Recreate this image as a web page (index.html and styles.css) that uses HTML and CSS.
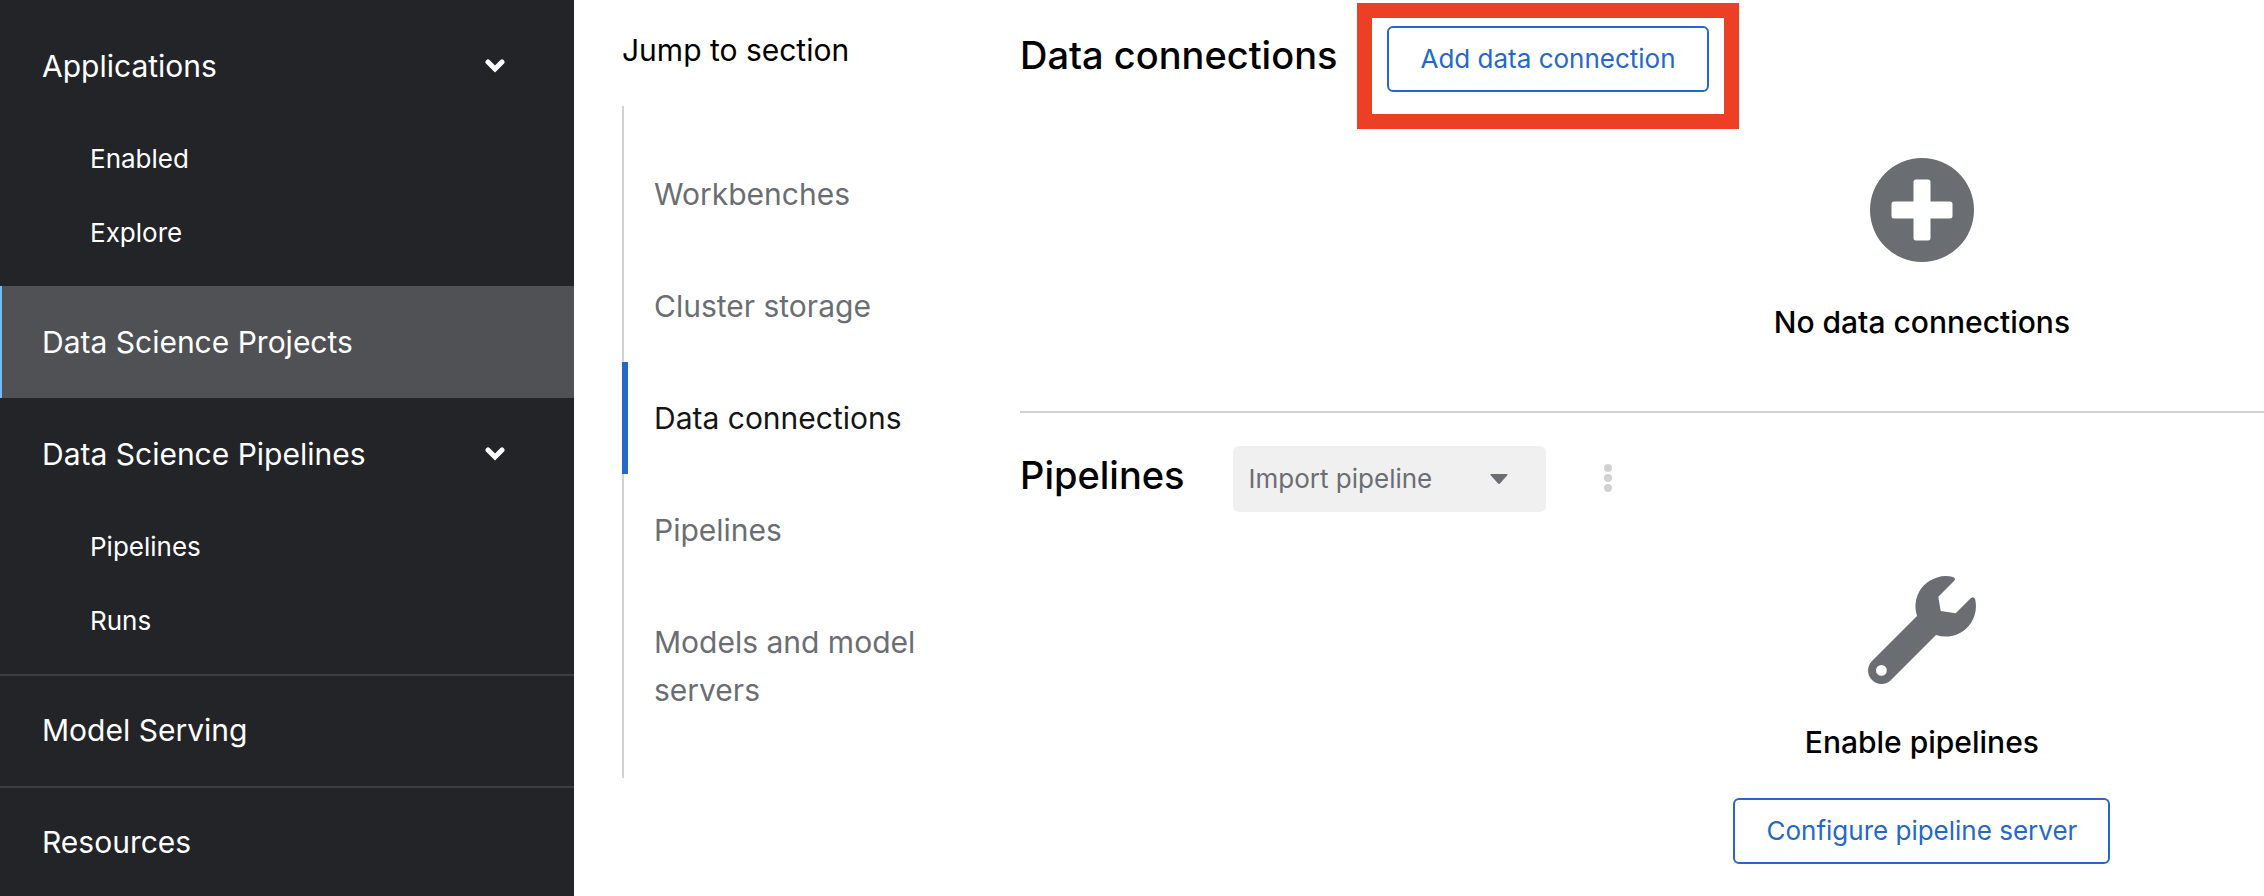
FILE: index.html
```
<!DOCTYPE html>
<html lang="en">
<head>
<meta charset="utf-8">
<title>Data Science Projects</title>
<link rel="stylesheet" href="styles.css">
</head>
<body>
<div class="page">
  <nav class="sidebar" aria-label="Global">
    <ul class="nav-list">
      <li>
        <button class="nav-link" type="button" aria-expanded="true">Applications
          <svg class="nav-toggle" viewBox="0 0 22 14" aria-hidden="true"><path d="M4 3l7 7 7-7"/></svg>
        </button>
        <ul class="subnav">
          <li><a class="subnav-link" href="#enabled">Enabled</a></li>
          <li><a class="subnav-link" href="#explore">Explore</a></li>
        </ul>
      </li>
      <li><a class="nav-link nav-link-current" href="#projects" aria-current="page">Data Science Projects</a></li>
      <li>
        <button class="nav-link" type="button" aria-expanded="true">Data Science Pipelines
          <svg class="nav-toggle" viewBox="0 0 22 14" aria-hidden="true"><path d="M4 3l7 7 7-7"/></svg>
        </button>
        <ul class="subnav">
          <li><a class="subnav-link" href="#nav-pipelines">Pipelines</a></li>
          <li><a class="subnav-link" href="#runs">Runs</a></li>
        </ul>
      </li>
      <li><a class="nav-link nav-link-divided" href="#serving">Model Serving</a></li>
      <li><a class="nav-link nav-link-divided" href="#resources">Resources</a></li>
    </ul>
  </nav>

  <aside class="jump">
    <h2 class="jump-title" id="jump-title">Jump to section</h2>
    <ul class="jump-list" aria-labelledby="jump-title">
      <li><a class="jump-link" href="#workbenches">Workbenches</a></li>
      <li><a class="jump-link" href="#storage">Cluster storage</a></li>
      <li><a class="jump-link jump-link-current" href="#connections">Data connections</a></li>
      <li><a class="jump-link" href="#pipelines">Pipelines</a></li>
      <li><a class="jump-link" href="#models">Models and model servers</a></li>
    </ul>
  </aside>

  <main class="content">
    <section class="section section-connections" id="connections">
      <header class="section-header">
        <h2 class="section-title">Data connections</h2>
        <div class="highlight"><button class="button" type="button">Add data connection</button></div>
      </header>
      <div class="empty">
        <svg class="empty-icon" viewBox="0 0 108 108" aria-hidden="true"><path fill-rule="evenodd" d="M54 2a52 52 0 1 1 0 104a52 52 0 1 1 0-104zM48 23.500q-2.500 0-2.500 2.500v19.500H26q-2.500 0-2.500 2.500v12q0 2.500 2.500 2.500h19.500V82q0 2.500 2.500 2.500h12q2.500 0 2.500-2.500V62.500H82q2.500 0 2.500-2.500V48q0-2.500-2.500-2.500H62.500V26q0-2.500-2.500-2.500z"/></svg>
        <h3 class="empty-title">No data connections</h3>
      </div>
    </section>
    <section class="section section-pipelines" id="pipelines">
      <header class="section-header">
        <h2 class="section-title">Pipelines</h2>
        <button class="dropdown" type="button" disabled>Import pipeline
          <svg class="caret" viewBox="0 0 18 10" aria-hidden="true"><path d="M1 0h16q1 0 .5 1L10 9.500q-1 .8-2 0L.5 1Q0 0 1 0z"/></svg>
        </button>
        <button class="kebab" type="button" disabled aria-label="Pipeline actions">
          <svg class="kebab-icon" viewBox="0 0 8 28" aria-hidden="true"><circle cx="4" cy="4" r="4"/><circle cx="4" cy="14" r="4"/><circle cx="4" cy="24" r="4"/></svg>
        </button>
      </header>
      <div class="empty">
        <svg class="empty-icon" viewBox="0 0 108 108" aria-hidden="true"><path fill-rule="evenodd" d="M85 1Q88.500 2.500 86 5L70.300 20.700L72.700 35L87.700 37.300L103 22Q106.500 20 107.300 24A30.300 30.300 0 0 1 68 59L23 104A13.400 13.400 0 0 1 4 85L49 40A30.300 30.300 0 0 1 85 1zM13.400 89a5.400 5.400 0 1 0 0 10.800a5.400 5.400 0 1 0 0-10.800z"/></svg>
        <h3 class="empty-title">Enable pipelines</h3>
        <button class="button" type="button">Configure pipeline server</button>
      </div>
    </section>
  </main>
</div>
</body>
</html>
```
FILE: styles.css
```
* {
  box-sizing: border-box;
}

body,
h2,
h3,
ul {
  margin: 0;
  padding: 0;
}

body,
button {
  font-family: Inter, "Liberation Sans", sans-serif;
  font-size: 30px;
  line-height: 48px;
}

ul {
  list-style: none;
}

a {
  text-decoration: none;
}

.page {
  display: grid;
  grid-template-columns: 574px 446px 1fr;
  height: 100vh;
  overflow: hidden;
  background: #fff;
  color: #000;
}

.sidebar {
  padding-top: 10px;
  background: #232428;
}

.nav-link {
  display: flex;
  align-items: center;
  justify-content: space-between;
  width: 100%;
  padding: 32px 68px 32px 42px;
  border: 0;
  background: none;
  color: #fff;
  text-align: left;
}

.nav-link-current {
  background: #505155;
  box-shadow: inset 2px 0 #73bcf7;
}

.nav-link-divided {
  box-shadow: inset 0 2px #3c3f42;
}

.nav-toggle {
  width: 22px;
  fill: none;
  stroke: #fff;
  stroke-width: 5;
  stroke-linecap: round;
}

.subnav {
  padding-bottom: 16px;
}

.subnav-link {
  display: block;
  padding: 16px 32px 16px 90px;
  color: #fff;
  font-size: 26px;
  line-height: 42px;
}

.jump {
  padding: 26px 48px;
}

.jump-title {
  margin-bottom: 32px;
  font-size: 30px;
  font-weight: 400;
}

.jump-list {
  padding: 32px 0;
  box-shadow: inset 2px 0 #d2d2d2;
}

.jump-link {
  display: block;
  padding: 32px;
  color: #6a6e73;
}

.jump-link-current {
  box-shadow: inset 6px 0 #2468c8;
  color: #151515;
}

.section-header {
  display: flex;
  align-items: flex-start;
}

.section-title {
  font-size: 38px;
  font-weight: 500;
  line-height: 52px;
}

.section-connections {
  padding-top: 3px;
  border-bottom: 2px solid #d2d2d2;
}

.section-connections .section-title {
  padding-top: 26px;
}

.highlight {
  margin-left: 20px;
  padding: 8px 15px 22px;
  border: 15px solid #ec3f26;
}

.button {
  padding: 10px 31px;
  border: 2px solid #2468c8;
  border-radius: 6px;
  background: #fff;
  color: #2468c8;
  font-size: 26px;
  line-height: 42px;
}

.empty {
  display: flex;
  flex-direction: column;
  align-items: center;
  padding-left: 45%;
}

.empty-icon {
  width: 108px;
  height: 108px;
  fill: #6a6e73;
}

.section-connections .empty {
  padding-top: 27px;
  padding-bottom: 65px;
}

.empty-title {
  margin-top: 34px;
  font-size: 30px;
  font-weight: 500;
}

.section-pipelines {
  padding-top: 33px;
}

.section-pipelines .section-title {
  padding-top: 3px;
}

.section-pipelines .empty {
  padding-top: 64px;
}

.section-pipelines .button {
  margin-top: 32px;
}

.dropdown {
  display: flex;
  align-items: center;
  gap: 58px;
  margin-left: 48px;
  padding: 12px 38px 12px 16px;
  border: 0;
  border-radius: 6px;
  background: #f0f0f0;
  color: #6a6e73;
  font-size: 26px;
  line-height: 42px;
}

.caret {
  width: 18px;
  fill: #6a6e73;
}

.kebab {
  display: flex;
  margin-left: 42px;
  padding: 18px 16px;
  border: 0;
  background: none;
}

.kebab-icon {
  width: 8px;
  height: 28px;
  fill: #d2d2d2;
}
```
